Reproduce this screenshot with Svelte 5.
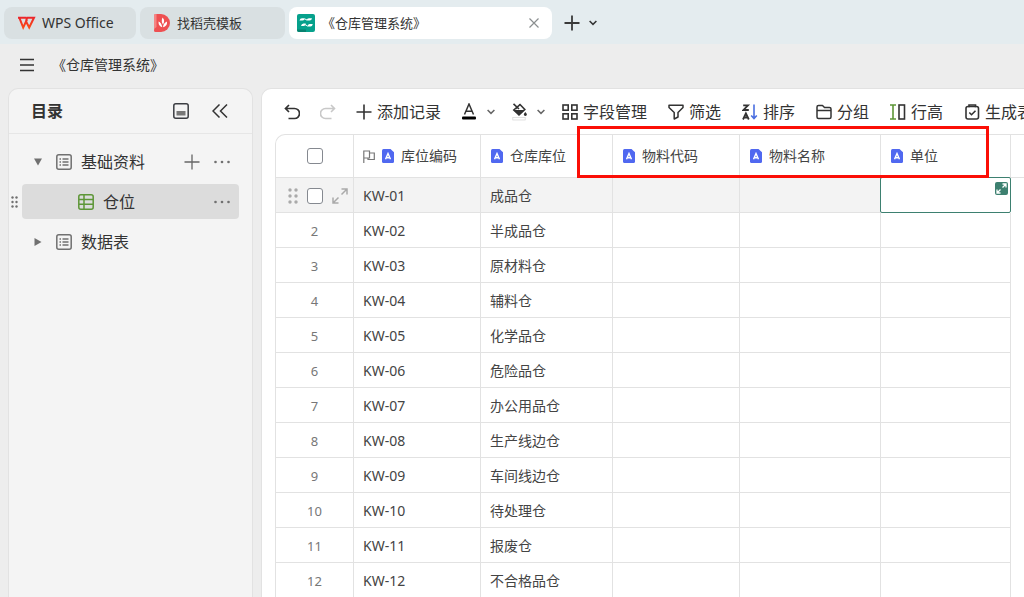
<script>
  const columns = [
    { name: '库位编码', flag: true, width: 127 },
    { name: '仓库库位', width: 132 },
    { name: '物料代码', width: 127 },
    { name: '物料名称', width: 141 },
    { name: '单位', width: 130 }
  ];
  const places = ['成品仓', '半成品仓', '原材料仓', '辅料仓', '化学品仓', '危险品仓', '办公用品仓', '生产线边仓', '车间线边仓', '待处理仓', '报废仓', '不合格品仓'];
  const rows = places.map((place, i) => ({ no: i + 1, code: 'KW-' + String(i + 1).padStart(2, '0'), place }));
</script>

{#snippet typeIcon()}
  <svg class="type" width="12" height="14" viewBox="0 0 12 14" aria-hidden="true">
    <path d="M1.5 0H8.5L12 3.2V12.5Q12 14 10.5 14H1.5Q0 14 0 12.500V1.500Q0 0 1.500 0Z" fill="#5068f0" />
    <path d="M3.500 10.300L6 4.500L8.500 10.300M4.300 8.700H7.700" fill="none" stroke="#fff" stroke-width="1.400" />
  </svg>
{/snippet}

{#snippet listIcon()}
  <svg width="16" height="16" viewBox="0 0 16 16" fill="none" stroke="#707070" stroke-width="1.500" aria-hidden="true">
    <rect x=".8" y=".8" width="14.400" height="14.400" rx="2" />
    <path d="M3.500 5H5M6.500 5H12.500M3.500 8H5M6.500 8H12.500M3.500 11H5M6.500 11H12.500" />
  </svg>
{/snippet}

{#snippet dots()}
  <svg width="16" height="4" viewBox="0 0 16 4" fill="#707070" aria-hidden="true">
    <circle cx="1.500" cy="2" r="1.300" /><circle cx="8" cy="2" r="1.300" /><circle cx="14.500" cy="2" r="1.300" />
  </svg>
{/snippet}

{#snippet chevron(color)}
  <svg width="8" height="6" viewBox="0 0 8 6" fill="none" stroke={color} stroke-width="1.500" aria-hidden="true"><path d="M.6 1L4 4.400L7.400 1" /></svg>
{/snippet}

<div class="app">
  <nav class="tabs" aria-label="标签页">
    <button class="tab home">
      <svg width="18" height="14" viewBox="0 0 18 14" fill="none" stroke-width="2" aria-hidden="true">
        <defs>
          <linearGradient id="wps" x1="0" y1="0" x2="0" y2="14" gradientUnits="userSpaceOnUse"><stop offset="0" stop-color="#e9212e" /><stop offset="1" stop-color="#ff5310" /></linearGradient>
        </defs>
        <path d="M0 1.800H8.200M1.400 1.800L5.200 11.500L9 3.500M7.800 5L11.200 11.500L16 1.800H9.200L8 4.800" stroke="url(#wps)" />
      </svg>
      <span class="latin">WPS Office</span>
    </button>
    <button class="tab template">
      <svg width="16" height="18" viewBox="0 0 16 18" aria-hidden="true">
        <path d="M1.500 0H7A9 9 0 0 1 7 18H1.500Q0 18 0 16.500V1.500Q0 0 1.500 0Z" fill="#ee5052" />
        <path d="M0 1.500Q0 0 1.500 0H2.500V13Q0 14 0 16.500Z" fill="#f58584" />
        <path d="M8.500 3.500Q11.500 6.500 9 10.500Q6.800 7.500 8.500 3.500ZM4.500 7.500Q7.500 8.500 8.300 13.300Q4.300 12 4.500 7.500ZM13 7.500Q13.500 12 9 13.300Q9.300 9 13 7.500Z" fill="#fff" />
      </svg>
      <span>找稻壳模板</span>
    </button>
    <div class="tab current">
      <svg width="18" height="18" viewBox="0 0 18 18" aria-hidden="true">
        <rect width="18" height="18" rx="2" fill="#06a18c" />
        <path d="M0 15.500H9V18H2Q0 18 0 16Z" fill="#078270" />
        <path d="M2.500 6.500Q3 4.200 5 4.200H8Q7.700 6.500 5.500 6.500ZM9.500 6.500Q10 4.200 12 4.200H15Q14.700 6.500 12.500 6.500ZM4 12Q4.500 9.500 6.500 9.500H8.800Q8.500 12 6.500 12ZM10.300 12.500Q10.800 10 12.500 10H15.800Q15.300 12.500 13.500 12.500Z" fill="#fff" />
        <path d="M8 5L10 6M8 10.500L10.500 12" stroke="#fff" stroke-width="1" />
      </svg>
      <span class="name">《仓库管理系统》</span>
      <button aria-label="关闭标签">
        <svg width="10" height="10" viewBox="0 0 10 10" stroke="#8b8f90" stroke-width="1.200" aria-hidden="true"><path d="M.5 .5L9.500 9.500M9.500 .5L.5 9.500" /></svg>
      </button>
    </div>
    <button class="new" aria-label="新建标签">
      <svg width="16" height="16" viewBox="0 0 16 16" stroke="#3a3a3a" stroke-width="1.800" aria-hidden="true"><path d="M8 .5V15.500M.5 8H15.500" /></svg>
    </button>
    <button aria-label="更多标签">{@render chevron('#333')}</button>
  </nav>

  <header class="title">
    <button aria-label="菜单">
      <svg width="14" height="14" viewBox="0 0 14 14" stroke="#333" stroke-width="1.500" aria-hidden="true"><path d="M0 1.500H14M0 7H14M0 12.500H14" /></svg>
    </button>
    <span>《仓库管理系统》</span>
  </header>

  <div class="body">
    <aside>
      <div class="head">
        <h2>目录</h2>
        <button aria-label="底部面板">
          <svg width="16" height="16" viewBox="0 0 16 16" aria-hidden="true">
            <rect x=".8" y=".8" width="14.400" height="14.400" rx="2" fill="none" stroke="#3b3d42" stroke-width="1.500" />
            <rect x="3.500" y="8" width="9" height="4.500" fill="#777" />
          </svg>
        </button>
        <button aria-label="收起目录">
          <svg width="16" height="14" viewBox="0 0 16 14" fill="none" stroke="#333" stroke-width="1.500" aria-hidden="true"><path d="M7.500 .5L1 7L7.500 13.500M15 .5L8.500 7L15 13.500" /></svg>
        </button>
      </div>
      <ul>
        <li>
          <svg class="caret" width="8" height="8" viewBox="0 0 8 8" fill="#707070" aria-hidden="true"><path d="M0 .5H8L4 7.500Z" /></svg>
          {@render listIcon()}
          <span class="name">基础资料</span>
          <button aria-label="新增">
            <svg width="16" height="16" viewBox="0 0 16 16" stroke="#666" stroke-width="1.300" aria-hidden="true"><path d="M8 .5V15.500M.5 8H15.500" /></svg>
          </button>
          <button aria-label="更多">{@render dots()}</button>
        </li>
        <li class="selected">
          <svg class="grip" width="7" height="12" viewBox="0 0 7 12" fill="#707070" aria-hidden="true">
            {#each [1.5, 6, 10.5] as y}<circle cx="1.500" cy={y} r="1.200" /><circle cx="5.500" cy={y} r="1.200" />{/each}
          </svg>
          <svg width="16" height="16" viewBox="0 0 16 16" fill="none" stroke="#5d9637" stroke-width="1.500" aria-hidden="true">
            <rect x=".8" y=".8" width="14.400" height="14.400" rx="2" /><path d="M6 1V15M1 5.500H15M1 10.300H15" />
          </svg>
          <span class="name">仓位</span>
          <button aria-label="更多">{@render dots()}</button>
        </li>
        <li>
          <svg class="caret" width="8" height="8" viewBox="0 0 8 8" fill="#707070" aria-hidden="true"><path d="M.5 0V8L7.500 4Z" /></svg>
          {@render listIcon()}
          <span class="name">数据表</span>
        </li>
      </ul>
    </aside>

    <main>
      <div class="toolbar">
        <button aria-label="撤销">
          <svg width="16" height="16" viewBox="0 0 16 16" fill="none" stroke="#333" stroke-width="1.700" aria-hidden="true"><path d="M5 1L1.500 4.500L5 8M1.500 4.500H10.500A4.800 4.800 0 0 1 10.500 14.500H4.500" /></svg>
        </button>
        <button class="redo" aria-label="重做">
          <svg width="16" height="16" viewBox="0 0 16 16" fill="none" stroke="#c8c8c8" stroke-width="1.600" aria-hidden="true"><path d="M11 1L14.500 4.500L11 8M14.500 4.500H5.500A4.800 4.800 0 0 0 5.500 14.500H11.500" /></svg>
        </button>
        <button class="add">
          <svg width="16" height="16" viewBox="0 0 16 16" stroke="#333" stroke-width="1.600" aria-hidden="true"><path d="M8 .5V15.500M.5 8H15.500" /></svg>
          添加记录
        </button>
        <button class="pick" aria-label="字体颜色">
          <svg width="14" height="17" viewBox="0 0 14 17" aria-hidden="true"><path d="M2.500 11.500L7 1L11.500 11.500M4 8.300H10" fill="none" stroke="#333" stroke-width="1.500" /><rect y="13.500" width="14" height="3" rx="1" fill="#000" /></svg>
          {@render chevron('#666')}
        </button>
        <button class="pick fill" aria-label="填充颜色">
          <svg width="16" height="18" viewBox="0 0 16 18" aria-hidden="true">
            <path d="M1.500 .8L7 6M8 1.500L12.800 6.500L7 12L1.800 7ZM8 1.500L3.500 6" fill="none" stroke="#333" stroke-width="1.600" />
            <path d="M1.500 7H12.500L7 12.300Z" fill="#333" /><path d="M13.300 9L14.700 10.800A1.500 1.500 0 1 1 12 10.800Z" fill="#333" />
            <rect x=".8" y="14.500" width="12.400" height="2.500" fill="#fff" stroke="#d5d5d5" stroke-width=".7" />
          </svg>
          {@render chevron('#666')}
        </button>
        <button>
          <svg width="16" height="16" viewBox="0 0 16 16" fill="none" stroke="#333" stroke-width="1.600" aria-hidden="true"><rect x="1" y="1" width="5.200" height="5.200" /><rect x="9.800" y="1" width="5.200" height="5.200" /><rect x="1" y="9.800" width="5.200" height="5.200" /><rect x="9.800" y="9.800" width="5.200" height="5.200" /></svg>
          字段管理
        </button>
        <button>
          <svg width="16" height="16" viewBox="0 0 16 16" fill="none" stroke="#333" stroke-width="1.500" stroke-linejoin="round" aria-hidden="true"><path d="M1 1.200H15V3.500L10 8.500V13L6.200 15V8.500L1 3.500Z" /></svg>
          筛选
        </button>
        <button>
          <svg width="16" height="16" viewBox="0 0 16 16" fill="none" stroke="#333" stroke-width="1.800" aria-hidden="true"><path d="M1.200 1.300H6L1.500 6H6.800M1 15.500L3.900 9.300L6.800 15.500M2 13.500H5.800" /><path d="M12 .5V14.500M9.200 11.500L12 14.500L14.800 11.500" stroke="#4a6ee0" stroke-width="1.600" /></svg>
          排序
        </button>
        <button>
          <svg width="16" height="16" viewBox="0 0 16 16" fill="none" stroke="#333" stroke-width="1.500" stroke-linejoin="round" aria-hidden="true"><path d="M1 3Q1 1.500 2.500 1.500H6.500L8.500 3.500H13.500Q15 3.500 15 5V13Q15 14.500 13.500 14.500H2.500Q1 14.500 1 13ZM1 6.500H15" /></svg>
          分组
        </button>
        <button>
          <svg width="16" height="16" viewBox="0 0 16 16" fill="none" stroke-width="1.600" aria-hidden="true"><path d="M0 1H6M3 1V15M0 15H6" stroke="#5d9637" /><rect x="9" y="1" width="5.500" height="14" stroke="#333" /></svg>
          行高
        </button>
        <button>
          <svg width="16" height="16" viewBox="0 0 16 16" fill="none" stroke="#333" stroke-width="1.600" aria-hidden="true"><rect x="2" y="2.500" width="12.500" height="12.500" rx="2" /><path d="M5 3.200V1H11.500V3.200M5.300 8.500L7.500 10.700L11.500 6.700" /></svg>
          生成表单
        </button>
      </div>

      <div class="sheet">
        <table>
          <colgroup>
            <col style:width="78px" />
            {#each columns as c}<col style:width="{c.width}px" />{/each}
            <col />
          </colgroup>
          <thead>
            <tr>
              <th><div class="pickrow"><i></i><input type="checkbox" aria-label="全选" /></div></th>
              {#each columns as c}
                <th>
                  <div class="label">
                    {#if c.flag}
                      <svg class="flag" width="12" height="13" viewBox="0 0 12 13" fill="none" stroke="#777" stroke-width="1.200" aria-hidden="true"><path d="M.8 13V1H6.500V8H.8M6.500 3H11.300V9.500H5V8" /></svg>
                    {/if}
                    {@render typeIcon()}
                    {c.name}
                  </div>
                </th>
              {/each}
              <th></th>
            </tr>
          </thead>
          <tbody>
            {#each rows as r, i}
              <tr class:active={i === 0}>
                <td class="no">
                  {#if i === 0}
                    <div class="pickrow">
                      <svg class="drag" width="10" height="16" viewBox="0 0 10 16" fill="#aaa" aria-hidden="true">
                        {#each [2, 8, 14] as y}<circle cx="2" cy={y} r="1.700" /><circle cx="8" cy={y} r="1.700" />{/each}
                      </svg>
                      <input type="checkbox" aria-label="选择第 1 行" />
                      <svg width="16" height="16" viewBox="0 0 16 16" fill="none" stroke="#aaa" stroke-width="1.500" aria-hidden="true"><path d="M9.500 1H15V6.500M15 1L9.500 6.500M1 9.500V15H6.500M1 15L6.500 9.500" /></svg>
                    </div>
                  {:else}{r.no}{/if}
                </td>
                <td>{r.code}</td>
                <td>{r.place}</td>
                <td></td>
                <td></td>
                <td class:focus={i === 0}>
                  {#if i === 0}
                    <button class="expand" aria-label="展开记录">
                      <svg width="13" height="13" viewBox="0 0 13 13" fill="none" stroke="#fff" stroke-width="1.300" aria-hidden="true"><path d="M7.500 2H11V5.500M11 2L7.500 5.500M2 7.500V11H5.500M2 11L5.500 7.500" /></svg>
                    </button>
                  {/if}
                </td>
                <td></td>
              </tr>
            {/each}
          </tbody>
        </table>
      </div>
      <div class="highlight"></div>
    </main>
  </div>
</div>

<style>
  :global(body) { margin: 0; overflow: hidden; }
  .app {
    height: 100vh; display: flex; flex-direction: column; background: #ededed; color: #333;
    font: 14px/20px 'Noto Sans', 'Noto Sans CJK SC', sans-serif;
  }
  .app * { box-sizing: border-box; }
  button { display: flex; align-items: center; border: 0; padding: 0; background: none; font: inherit; color: inherit; white-space: nowrap; }
  svg { flex: none; display: block; }

  .tabs { display: flex; align-items: center; gap: 4px; padding: 7px 4px 5px; background: #e4ecef; font-size: 13px; }
  .tab { height: 32px; display: flex; align-items: center; border-radius: 8px; background: #d9e0e2; gap: 7px; }
  .home { width: 132px; padding-left: 14px; gap: 6px; font-size: 14px; }
  .template { width: 145px; padding-left: 14px; }
  .current { width: 263px; padding: 0 13px 0 8px; background: #fff; }
  .name { flex: 1; }
  .new { margin: 0 5px 0 8px; }

  .title { display: flex; align-items: center; gap: 18px; height: 44px; flex: none; padding: 0 0 2px 20px; }
  .body { flex: 1; min-height: 0; display: flex; gap: 8px; padding-left: 8px; }

  aside { width: 245px; flex: none; border: 1px solid #e2e2e2; border-bottom: 0; border-radius: 10px 10px 0 0; background: #f4f4f4; font-size: 16px; }
  .head { display: flex; align-items: center; gap: 23px; height: 45px; padding: 0 24px 0 22px; border-bottom: 1px solid #e6e6e6; }
  h2 { flex: 1; margin: 0; font-size: 16px; line-height: 24px; }
  ul { list-style: none; margin: 0; padding: 10px 13px; display: grid; gap: 5px; }
  li { position: relative; display: flex; align-items: center; gap: 9px; height: 35px; padding: 0 9px 0 12px; border-radius: 4px; }
  li .caret { margin-right: 5px; }
  li button + button { margin-left: 5px; }
  .selected { background: #dcdcdc; padding-left: 56px; }
  .grip { position: absolute; left: -11px; }

  main { position: relative; flex: 1; min-width: 0; overflow: hidden; background: #fff; border: 1px solid #e2e2e2; border-width: 1px 0 0 1px; border-top-left-radius: 10px; }
  .toolbar { display: flex; align-items: center; gap: 21px; height: 45px; padding-left: 22px; font-size: 16px; }
  .toolbar button { gap: 5px; flex: none; }
  .toolbar .redo { margin: 0 -1px; }
  .toolbar .pick { gap: 11px; }
  .toolbar .fill { margin: 0 -4px; gap: 9px; }

  .sheet { margin-left: 13px; border: 1px solid #e2e2e2; border-width: 1px 0 0 1px; border-top-left-radius: 10px; overflow: hidden; }
  table { width: 100%; table-layout: fixed; border-collapse: separate; border-spacing: 0; }
  th, td { padding: 0 9px; border: 0 solid #e2e2e2; border-width: 0 1px 1px 0; text-align: left; font-weight: 400; color: #444; }
  th { height: 43px; }
  td { height: 35px; padding-top: 2px; }
  th:last-child { border-right: 0; }
  tbody td:last-child { border: 0; }
  .active { background: #f3f3f3; }
  .active td:last-child { background: #fff; }
  .label { display: flex; align-items: center; gap: 7px; }
  th:not(:nth-child(2)) .label { padding-left: 1px; }
  td.no { text-align: center; color: #777; font-size: 13px; }
  th:first-child, .no { padding-left: 0; padding-right: 0; }
  .pickrow { display: grid; grid-template-columns: 1fr 16px 1fr; align-items: center; gap: 9px; }
  .drag { justify-self: end; }
  input { appearance: none; width: 16px; height: 16px; margin: 0; border: 1px solid #858990; border-radius: 3px; background: #fff; }
  td.focus { position: relative; background: #fff; border-color: transparent; }
  td.focus::before { content: ''; position: absolute; inset: -1px; border: 1px solid #3d8070; border-radius: 2px; }
  .expand { position: absolute; right: 2px; top: 4px; border-radius: 2px; background: #3d8070; }

  .highlight { position: absolute; left: 315px; top: 37px; width: 412px; height: 52px; border: 3px solid #fb0e06; pointer-events: none; }
</style>
